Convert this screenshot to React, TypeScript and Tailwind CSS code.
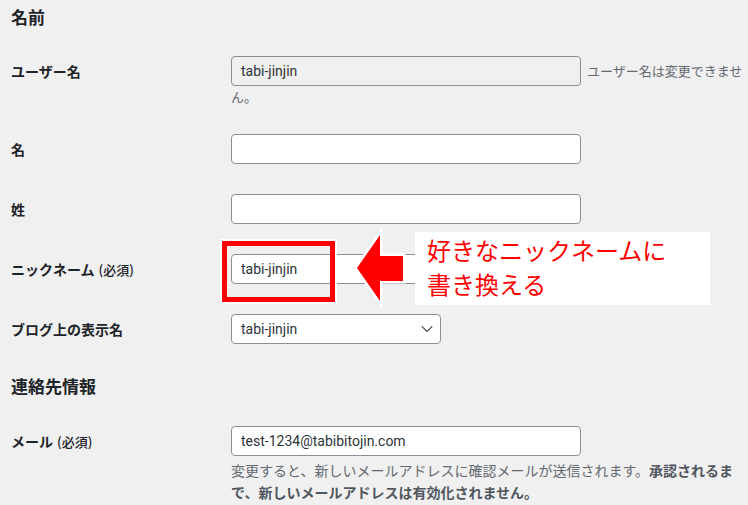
import { ChevronDown } from 'lucide-react';

const font = '[font-family:"Noto_Sans_CJK_JP","Noto_Sans",sans-serif]';
const latin = '[font-family:Roboto,"Noto_Sans_CJK_JP",sans-serif]';

const baseInput = `h-[30px] w-[350px] rounded-[4px] border border-[#8c8f94] px-[9px] text-[14px] text-[#2c3338] outline-none ${latin}`;
const inputCls = `${baseInput} bg-white`;

const Label = ({ text, required }: { text: string; required?: boolean }) => (
  <div className="w-[231px] shrink-0 pl-[11px] pt-[21px] text-[14px] leading-[18px] font-bold text-[#1d2327]">
    {text}
    {required && <span className="ml-[4px] text-[13px] font-medium">(必須)</span>}
  </div>
);

const Row = ({
  label,
  required,
  children,
  className = 'py-[15px]',
}: {
  label: string;
  required?: boolean;
  children: React.ReactNode;
  className?: string;
}) => (
  <div className="flex items-start">
    <Label text={label} required={required} />
    <div className={`flex-1 pr-[10px] ${className}`}>{children}</div>
  </div>
);

export default function App() {
  return (
    <div className={`relative h-[505px] w-[748px] overflow-hidden bg-[#f0f0f1] ${font}`}>
      {/* 名前 */}
      <h2 className="pl-[11px] pt-[5px] mb-[13px] text-[17px] leading-[23px] font-bold text-[#1d2327]">名前</h2>

      <Row label="ユーザー名" className="pt-[15px] pb-[11px]">
        <div className="flex items-center">
          <div className={`${baseInput} bg-[#f0f0f1] leading-[28px]`}>tabi-jinjin</div>
          <span className="ml-[6px] whitespace-nowrap text-[13px] text-[#646970]">ユーザー名は変更できませ</span>
        </div>
        <div className="text-[13px] leading-[22px] text-[#646970]">ん。</div>
      </Row>

      <Row label="名">
        <input className={inputCls} readOnly />
      </Row>

      <Row label="姓">
        <input className={inputCls} readOnly />
      </Row>

      <Row label="ニックネーム" required>
        <input className={inputCls} value="tabi-jinjin" readOnly />
      </Row>

      <Row label="ブログ上の表示名">
        <div
          className={`relative h-[30px] w-[210px] rounded-[4px] border border-[#8c8f94] bg-white px-[9px] text-[14px] leading-[28px] text-[#2c3338] ${latin}`}
        >
          tabi-jinjin
          <ChevronDown className="absolute right-[3px] top-[4px] h-[20px] w-[20px] text-[#50575e]" strokeWidth={1.3} />
        </div>
      </Row>

      {/* 連絡先情報 */}
      <h2 className="pl-[11px] mt-[15px] mb-[14px] text-[17px] leading-[23px] font-bold text-[#1d2327]">連絡先情報</h2>

      <Row label="メール" required className="pt-[15px]">
        <input className={inputCls} value="test-1234@tabibitojin.com" readOnly />
        <p className="mt-[3px] text-[14px] leading-[22px] text-[#646970]">
          変更すると、新しいメールアドレスに確認メールが送信されます。
          <strong className="text-[#50575e]">承認されるまで、新しいメールアドレスは有効化されません。</strong>
        </p>
      </Row>

      {/* annotation: red frame */}
      <div className="absolute left-[222px] top-[241px] h-[61px] w-[113px] border-[5px] border-[#ff0000] shadow-[0_0_0_2px_#ffffff]" />

      {/* annotation: arrow */}
      <svg className="absolute left-[350px] top-[228px]" width="60" height="80" viewBox="0 0 60 80">
        <polygon
          points="7,40 30,7 30,28 53,28 53,53 30,53 30,73"
          fill="#ff0000"
          stroke="#ffffff"
          strokeWidth="5"
          strokeLinejoin="miter"
          paintOrder="stroke"
        />
      </svg>

      {/* annotation: callout */}
      <div className="absolute left-[415px] top-[232px] h-[73px] w-[295px] bg-white pl-[12px] pt-[1px] text-[24px] leading-[34px] text-[#ff0000]">
        好きなニックネームに
        <br />
        書き換える
      </div>
    </div>
  );
}
